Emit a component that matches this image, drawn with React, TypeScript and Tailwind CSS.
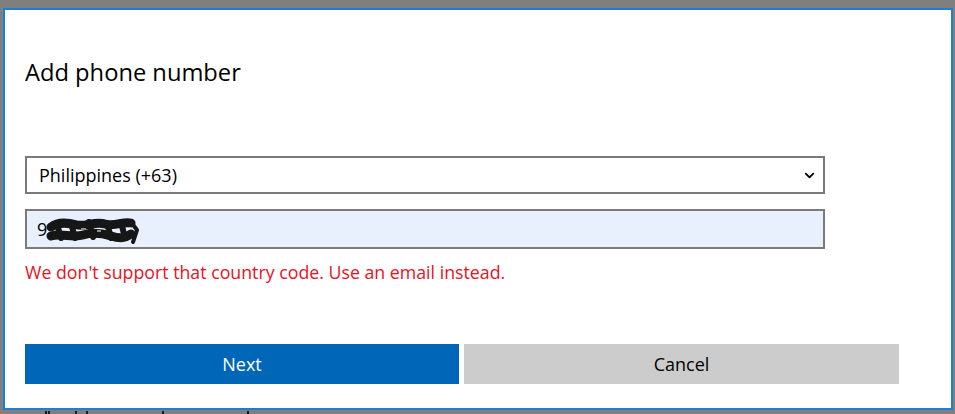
import { ChevronDown } from "lucide-react";

const font = { fontFamily: '"Open Sans", "Noto Sans", sans-serif' };

// redacted phone digits, scribbled over
function Scribble() {
  return (
    <svg width="96" height="30" viewBox="0 0 96 30" className="-ml-[2px] mt-[4px]">
      <g fill="none" stroke="#161616" strokeLinecap="round" strokeLinejoin="round">
        <path d="M6 11 C14 5, 24 7, 32 9 S50 5, 60 8 S78 5, 86 7" strokeWidth="9" />
        <path d="M6 20 C16 17, 28 22, 38 19 S56 17, 66 20 S80 22, 86 18" strokeWidth="9" />
        <path d="M12 8 L16 22 M26 7 L30 22 M44 6 L48 21 M62 7 L66 22 M76 6 L80 22" strokeWidth="6" />
        <path d="M86 6 L92 14 L88 26" strokeWidth="4" />
      </g>
      <g fill="#8e8e8e">
        <rect x="36" y="12" width="5" height="2" />
        <rect x="52" y="14" width="4" height="2" />
      </g>
    </svg>
  );
}

// tops of text lying behind the dialog
const peeks = [45, 48, 75, 86, 162, 247];

export default function App() {
  return (
    <div className="w-[955px] h-[414px] overflow-hidden bg-[#7f7f7f] pt-[8px] pl-[3px] relative" style={font}>
      <div className="w-[950px] h-[402px] bg-white border-2 border-[#1a7fd6] pl-[20px] flex flex-col">
        {/* Title */}
        <h1 className="mt-[46px] text-[23.7px] leading-[32px] text-black">Add phone number</h1>

        {/* Country select */}
        <div className="mt-[68px] w-[800px] h-[38px] border-2 border-[#7a7a7a] bg-white flex items-center justify-between pl-[12px] pr-[6px]">
          <span className="text-[18px] leading-[24px] text-black">Philippines (+63)</span>
          <ChevronDown className="w-[15px] h-[15px] text-black" strokeWidth={3} />
        </div>

        {/* Phone input */}
        <div className="mt-[15px] w-[800px] h-[40px] border-2 border-[#7a7a7a] bg-[#e8f0fe] flex items-center pl-[10px]">
          <span className="text-[18px] leading-[24px] text-black">9</span>
          <Scribble />
        </div>

        {/* Error */}
        <p className="mt-[11px] text-[17.75px] leading-[24px] text-[#e81123]">
          We don't support that country code. Use an email instead.
        </p>

        {/* Buttons */}
        <div className="mt-[60px] flex gap-[5px]">
          <button className="w-[434px] h-[40px] bg-[#0067b8] text-white text-[18px]">Next</button>
          <button className="w-[435px] h-[40px] bg-[#cccccc] text-black text-[18px]">Cancel</button>
        </div>
      </div>

      <div className="flex">
        {peeks.map((x) => (
          <span key={x} className="absolute top-[411px] w-[2px] h-[3px] bg-[#1a1a1a]" style={{ left: x }} />
        ))}
      </div>
    </div>
  );
}
